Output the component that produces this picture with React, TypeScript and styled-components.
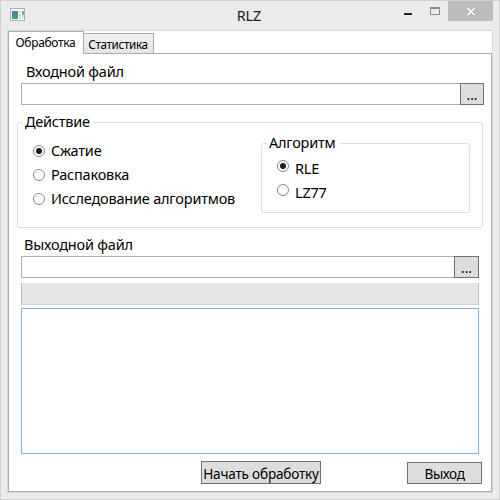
import React, { useState } from "react";
import styled, { createGlobalStyle } from "styled-components";

const GlobalStyle = createGlobalStyle`
  *, *::before, *::after { box-sizing: border-box; }
  body { margin: 0; background: #ebebeb; }
  button, input, textarea { font: inherit; margin: 0; border-radius: 0; outline: none; }
`;

const Window = styled.div`
  width: 500px;
  height: 500px;
  border: 1px solid #d1d1d1;
  background: #ebebeb;
  color: #000;
  font-family: "Noto Sans", "Open Sans", sans-serif;
  font-size: 14.5px;
  overflow: hidden;
`;

const TitleBar = styled.header`
  display: grid;
  grid-template-columns: 132px 1fr 134px;
  height: 29px;
`;

const AppIcon = styled.svg`
  display: block;
  margin: 7px 0 0 9px;
`;

const Title = styled.div`
  text-align: center;
  font-size: 14.5px;
  line-height: 20px;
  padding-top: 4px;
  letter-spacing: -0.1px;
  color: #222;
`;

const Controls = styled.div`
  display: flex;
  justify-content: flex-end;
  align-items: flex-start;
  padding-right: 6px;
`;

const ControlButton = styled.button<{ $width: number; $close?: boolean }>`
  width: ${(p) => p.$width}px;
  height: 20px;
  padding: 0;
  border: 0;
  background: ${(p) => (p.$close ? "#bcbcbc" : "transparent")};

  svg { display: block; }
`;

const Client = styled.main`
  width: 486px;
  height: 463px;
  margin-left: 6px;
  border: 1px solid #d9d9d9;
  background: #fff;
`;

const TabStrip = styled.div`
  display: flex;
  align-items: flex-end;
  height: 22px;
`;

const Tab = styled.button<{ $active?: boolean }>`
  position: relative;
  width: ${(p) => (p.$active ? 76 : 70)}px;
  height: ${(p) => (p.$active ? 23 : 20)}px;
  margin-bottom: ${(p) => (p.$active ? -1 : 0)}px;
  padding: 0 1px 0 0;
  border: 1px solid #acacac;
  border-bottom: 0;
  border-left-width: ${(p) => (p.$active ? 1 : 0)}px;
  background: ${(p) => (p.$active ? "#fff" : "linear-gradient(#f0f0f0, #e5e5e5)")};
  font-size: ${(p) => (p.$active ? 12 : 11.7)}px;
  line-height: 20px;
  letter-spacing: ${(p) => (p.$active ? -0.32 : -0.35)}px;
  white-space: nowrap;
`;

const Panel = styled.section`
  display: flex;
  flex-direction: column;
  height: 439px;
  border: 1px solid #acacac;
  padding: 8px 7px 0 12px;
`;

const Label = styled.label<{ $indent: number }>`
  height: 21px;
  padding-left: ${(p) => p.$indent}px;
  line-height: 18px;
  letter-spacing: -0.2px;
`;

const FileRow = styled.div<{ $width: number }>`
  display: flex;
  width: ${(p) => p.$width}px;
  height: 22px;
`;

const FileInput = styled.input`
  flex: 1;
  min-width: 0;
  border: 1px solid #abadb3;
  border-right: 0;
  background: #fff;
  padding: 0 4px;
`;

const Button = styled.button<{ $width: number; $height?: number; $spacing?: number }>`
  width: ${(p) => p.$width}px;
  height: ${(p) => p.$height ?? 22}px;
  padding: 2px 0 0;
  border: 1px solid #707070;
  background: #ddd;
  color: #000;
  font-size: 13.6px;
  line-height: 18px;
  letter-spacing: ${(p) => p.$spacing ?? 0}px;
  white-space: nowrap;
`;

const Group = styled.fieldset<{ $inner?: boolean }>`
  position: relative;
  display: flex;
  min-width: 0;
  width: ${(p) => (p.$inner ? 209 : 466)}px;
  height: ${(p) => (p.$inner ? 70 : 106)}px;
  margin: ${(p) => (p.$inner ? "20px 0 0 auto" : "17px 0 7px -4px")};
  padding: ${(p) => (p.$inner ? "12px 0 0 15px" : "0 12px 0 15px")};
  border: 1px solid #d5dfe5;
  border-radius: 3px;
`;

const GroupTitle = styled.div<{ $width: number }>`
  position: absolute;
  top: -11px;
  left: 5px;
  width: ${(p) => p.$width}px;
  padding-left: 2px;
  background: #fff;
  line-height: 18px;
  letter-spacing: -0.25px;
  white-space: nowrap;
`;

const Options = styled.div<{ $top?: number }>`
  display: flex;
  flex-direction: column;
  padding-top: ${(p) => p.$top ?? 0}px;
`;

const Option = styled.label<{ $drop?: number }>`
  display: flex;
  gap: 6px;
  height: 24px;
  line-height: 18px;
  letter-spacing: -0.2px;
  white-space: nowrap;

  span { padding-top: ${(p) => p.$drop ?? 0}px; }
`;

const Radio = styled.input`
  appearance: none;
  flex: none;
  width: 12px;
  height: 12px;
  margin: 4px 0 0;
  border: 1px solid #858585;
  border-radius: 50%;
  background: #fff;

  &:checked { background: radial-gradient(circle, #212121 2.7px, #fff 3.4px); }
`;

const Progress = styled.div`
  width: 458px;
  height: 22px;
  margin-top: 5px;
  border: solid #bcbcbc;
  border-width: 0 1px;
  background: #e6e6e6;
  box-shadow: inset 0 -1px #d6d6d6;
`;

const Output = styled.textarea`
  display: block;
  width: 458px;
  height: 146px;
  margin-top: 3px;
  padding: 2px 4px;
  border: 1px solid #7eb4ea;
  background: #fff;
  resize: none;
`;

const Footer = styled.footer`
  display: flex;
  justify-content: space-between;
  align-items: flex-end;
  width: 281px;
  height: 23px;
  margin: 7px 0 0 180px;
`;

const actions = ["Сжатие", "Распаковка", "Исследование алгоритмов"];
const algorithms = ["RLE", "LZ77"];

export default function App() {
  const [action, setAction] = useState(actions[0]);
  const [algorithm, setAlgorithm] = useState(algorithms[0]);

  return (
    <>
      <GlobalStyle />
      <Window>
        <TitleBar>
          <AppIcon width="16" height="14" viewBox="0 0 16 14">
            <defs>
              <linearGradient id="screen" x1="0" y1="0" x2="1" y2="1">
                <stop offset="0" stopColor="#4676a8" />
                <stop offset="1" stopColor="#48a46c" />
              </linearGradient>
            </defs>
            <rect x="0.5" y="0.5" width="14" height="12" fill="#f7f8f8" stroke="#a9afb5" />
            <rect x="2" y="3" width="6" height="8" fill="url(#screen)" />
            <rect x="9" y="3" width="2" height="8" fill="#d8dfe2" />
            <rect x="12" y="3" width="2" height="4" fill="#78a8b3" />
            <rect x="12" y="7" width="2" height="4" fill="#d8e3e0" />
          </AppIcon>
          <Title>RLZ</Title>
          <Controls>
            <ControlButton $width={26} aria-label="Свернуть">
              <svg width="26" height="20"><rect x="8" y="12" width="8" height="2" fill="#222" /></svg>
            </ControlButton>
            <ControlButton $width={26} aria-label="Развернуть">
              <svg width="26" height="20">
                <path d="M8 6h10v8H8zM9 8v5h8V8z" fill="#8b8b8b" fillRule="evenodd" />
              </svg>
            </ControlButton>
            <ControlButton $width={45} $close aria-label="Закрыть">
              <svg width="45" height="20" shapeRendering="crispEdges">
                <path d="M19 7h2v1h-2zM25 7h2v1h-2zM20 8h2v1h-2zM24 8h2v1h-2zM21 9h4v1h-4zM22 10h2v1h-2zM21 11h4v1h-4zM20 12h2v1h-2zM24 12h2v1h-2zM19 13h2v1h-2zM25 13h2v1h-2z" fill="#fff" />
              </svg>
            </ControlButton>
          </Controls>
        </TitleBar>
        <Client>
          <TabStrip>
            <Tab $active>Обработка</Tab>
            <Tab>Статистика</Tab>
          </TabStrip>
          <Panel>
            <Label $indent={5} htmlFor="source">Входной файл</Label>
            <FileRow $width={463}>
              <FileInput id="source" />
              <Button $width={24}>...</Button>
            </FileRow>
            <Group>
              <GroupTitle $width={71}>Действие</GroupTitle>
              <Options $top={18}>
                {actions.map((name) => (
                  <Option key={name}>
                    <Radio type="radio" name="action" checked={action === name} onChange={() => setAction(name)} />
                    <span>{name}</span>
                  </Option>
                ))}
              </Options>
              <Group $inner>
                <GroupTitle $width={73}>Алгоритм</GroupTitle>
                <Options>
                  {algorithms.map((name) => (
                    <Option key={name} $drop={3}>
                      <Radio type="radio" name="algorithm" checked={algorithm === name} onChange={() => setAlgorithm(name)} />
                      <span>{name}</span>
                    </Option>
                  ))}
                </Options>
              </Group>
            </Group>
            <Label $indent={3} htmlFor="target">Выходной файл</Label>
            <FileRow $width={458}>
              <FileInput id="target" />
              <Button $width={25}>...</Button>
            </FileRow>
            <Progress role="progressbar" />
            <Output aria-label="Результат" />
            <Footer>
              <Button $width={120} $height={23} $spacing={-0.2}>Начать обработку</Button>
              <Button $width={75} $spacing={-0.4}>Выход</Button>
            </Footer>
          </Panel>
        </Client>
      </Window>
    </>
  );
}
